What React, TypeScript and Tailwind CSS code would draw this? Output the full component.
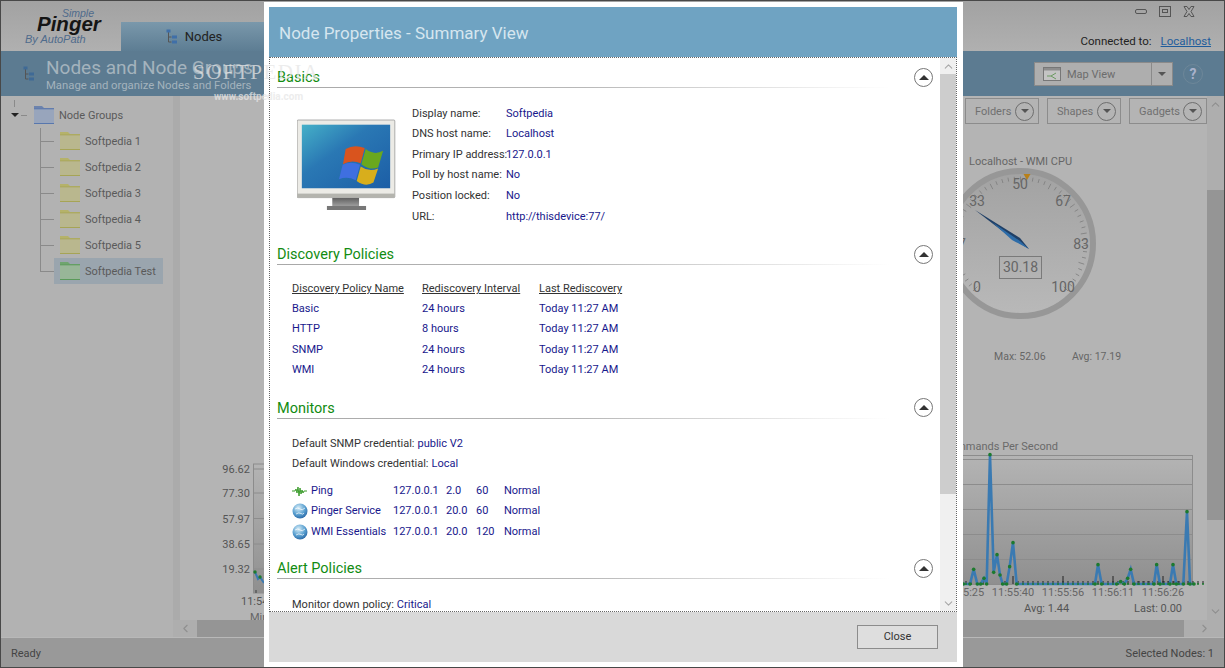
import React from "react";
import { ChevronUp, ChevronDown, ChevronLeft, ChevronRight } from "lucide-react";

const zoomLine: [number, number][] = [
  [250, 462], [270, 462], [281, 418], [292, 462], [302, 462], [312, 445], [320, 462], [330, 74], [341, 427], [351, 374],
  [360, 435], [368, 462], [380, 462], [389, 410], [399, 338], [410, 462], [645, 462], [654, 404], [665, 462], [710, 462],
  [722, 455], [733, 462], [743, 445], [752, 418], [762, 462], [822, 462], [830, 404], [840, 462], [870, 462], [879, 404],
  [889, 462], [910, 462], [921, 245], [930, 462], [942, 462],
];
// the chart points were read off a 3x crop that starts at (880, 430)
const linePts = zoomLine.map(([x, y]) => [880 + x / 3, 430 + y / 3]);
const baseDots = [
  ...Array.from({ length: 43 }, (_, i) => 1018 + i * 5),
  ...Array.from({ length: 12 }, (_, i) => 1134 + i * 5),
  ...[966, 971, 977, 983, 1002, 1005],
];

function TreeIcon({ color = "#3f6fa8" }: { color?: string }) {
  return (
    <svg width="12" height="15" viewBox="0 0 12 15" fill="none">
      <path d="M2.5 3v10h3M2.5 8h3" stroke="#555" />
      <rect x="0.5" y="0.5" width="4" height="3" fill={color} />
      <rect x="6" y="6.5" width="5" height="3" fill={color} />
      <rect x="6" y="11.5" width="5" height="3" fill={color} />
    </svg>
  );
}

function Folder({ top, body, edge }: { top: string; body: string; edge: string }) {
  return (
    <svg width="20" height="20" viewBox="0 0 20 20" className="shrink-0">
      <path d="M0 1h8l2 2h10v16H0z" fill={top} />
      <rect x="0" y="4" width="20" height="15" fill={body} />
      <rect x="0" y="18" width="20" height="1" fill={edge} />
      <rect x="0" y="3.5" width="20" height="0.8" fill={edge} />
    </svg>
  );
}

function TreeRow({ label, selected }: { label: string; selected?: boolean }) {
  return (
    <div className="flex items-center h-[26px]">
      <div className="w-[13px] h-px bg-[#8a8a8a]" />
      <div className={`flex items-center gap-[5px] h-[26px] w-[109px] pl-[6px] ${selected ? "bg-[#9aa5ae]" : ""}`}>
        {selected ? <Folder top="#6fa56f" body="#98b698" edge="#5a9a5a" /> : <Folder top="#b5b26a" body="#b9b78e" edge="#a6a456" />}
        <span className="pt-[3px] text-[11px] text-[#5a5a5a] whitespace-nowrap">{label}</span>
      </div>
    </div>
  );
}

function ToolButton({ label, width }: { label: string; width: string }) {
  return (
    <div className={`flex items-center justify-between h-[26px] pl-[9px] pr-[4px] border border-[#8c8c8c] ${width}`}>
      <span className="pt-[3px] text-[11px] text-[#707070]">{label}</span>
      <div className="flex items-center justify-center w-[19px] h-[19px] rounded-full border border-[#6e6e6e]">
        <div className="w-0 h-0 border-x-[4px] border-x-transparent border-t-[4px] border-t-[#555]" />
      </div>
    </div>
  );
}

function Section({ title, children }: { title: string; children: React.ReactNode }) {
  return (
    <div>
      <div className="flex items-center h-[22px]">
        <div className="relative w-[613px] h-[22px]">
          <div className="text-[14.5px] leading-[24px] text-[#128c12]">{title}</div>
          <div className="absolute left-0 right-0 bottom-0 h-px bg-linear-to-r from-[#a8a8a8] via-[#b8b8b8] to-transparent" />
        </div>
        <div className="flex items-center justify-center ml-[24px] w-[19px] h-[19px] rounded-full border border-[#777] bg-white">
          <div className="w-0 h-0 border-x-[5px] border-x-transparent border-b-[5px] border-b-[#333]" />
        </div>
      </div>
      {children}
    </div>
  );
}

function Prop({ label, value }: { label: string; value: string }) {
  return (
    <div className="flex items-center h-[20.6px]">
      <span className="w-[94px] text-[#333] whitespace-nowrap">{label}</span>
      <span className="text-[#18188c]">{value}</span>
    </div>
  );
}

function Monitor() {
  return (
    <svg width="99" height="92" viewBox="100 355 295 275" className="shrink-0">
      <defs>
        <linearGradient id="screen" x1="0" y1="0" x2="1" y2="1">
          <stop offset="0" stopColor="#45b0c8" />
          <stop offset="0.4" stopColor="#2a78b4" />
          <stop offset="1" stopColor="#1c5ea6" />
        </linearGradient>
        <linearGradient id="stand" x1="0" y1="0" x2="0" y2="1">
          <stop offset="0" stopColor="#5d5d5d" />
          <stop offset="1" stopColor="#a0a0a0" />
        </linearGradient>
      </defs>
      <rect x="205" y="590" width="80" height="26" fill="url(#stand)" />
      <rect x="189" y="615" width="117" height="12" fill="#777" />
      <rect x="100" y="358" width="292" height="232" rx="3" fill="#ecebe6" stroke="#8a8a8a" strokeWidth="2" />
      <rect x="100" y="578" width="292" height="12" fill="#b4b4ae" />
      <rect x="114" y="372" width="264" height="190" fill="url(#screen)" />
      <path d="M245 445Q270 430 302 442L290 487Q262 476 237 490Z" fill="#d9541e" />
      <path d="M305 445Q330 465 357 450L342 500Q318 510 292 490Z" fill="#6aa81e" />
      <path d="M236 492Q260 480 288 492L275 538Q250 525 225 535Z" fill="#3f6fe0" />
      <path d="M290 497Q315 515 342 503L328 545Q305 560 278 540Z" fill="#d8ae1c" />
    </svg>
  );
}

function Globe({ id }: { id: string }) {
  return (
    <svg width="16" height="16" viewBox="0 0 16 16" className="shrink-0">
      <defs>
        <radialGradient id={id} cx="0.4" cy="0.3" r="0.8">
          <stop offset="0" stopColor="#d8eef8" />
          <stop offset="0.55" stopColor="#5aa0d0" />
          <stop offset="1" stopColor="#1d5a9c" />
        </radialGradient>
      </defs>
      <circle cx="8" cy="8" r="7.5" fill={`url(#${id})`} />
      <path d="M3 6q3-2 5 0t5-1M4 11q3-2 5-.5t3-.5" stroke="#fff" strokeOpacity="0.7" fill="none" />
    </svg>
  );
}

function PingIcon() {
  return (
    <svg width="16" height="12" viewBox="0 0 16 12" className="shrink-0">
      <path d="M0 6h3l1-2 1 4 1-6 1 9 1-8 1 6 1-4 1 3 1-2h3" stroke="#3c9c2c" fill="none" />
    </svg>
  );
}

function MonitorRow({ icon, name, a, b, c }: { icon: React.ReactNode; name: string; a: string; b: string; c: string }) {
  return (
    <div className="flex items-center h-[20.5px] text-[#18188c]">
      <span className="w-[19px] flex justify-start">{icon}</span>
      <span className="w-[82px] whitespace-nowrap">{name}</span>
      <span className="w-[53px]">127.0.0.1</span>
      <span className="w-[30px]">{a}</span>
      <span className="w-[28px]">{b}</span>
      <span>{c}</span>
    </div>
  );
}

function Gauge() {
  const cx = 1020.5;
  const cy = 243.5;
  const ticks = Array.from({ length: 51 }, (_, i) => {
    const a = ((225 - i * 5.4) * Math.PI) / 180;
    const long = i % 5 === 0;
    const r1 = 67;
    const r2 = long ? 61 : 63;
    return { x1: cx + r1 * Math.cos(a), y1: cy - r1 * Math.sin(a), x2: cx + r2 * Math.cos(a), y2: cy - r2 * Math.sin(a) };
  });
  const labels: [string, number, number][] = [
    ["0", 977, 292], ["17", 958, 249], ["33", 977, 206], ["50", 1020, 189], ["67", 1063, 206], ["83", 1081, 249], ["100", 1063, 292],
  ];
  return (
    <svg width="200" height="215" viewBox="945 150 200 215" className="absolute left-[765px] top-[54px]" fontFamily="Roboto,sans-serif">
      <defs>
        <linearGradient id="gaugeFace" x1="0" y1="0" x2="0" y2="1">
          <stop offset="0" stopColor="#a2a2a2" />
          <stop offset="1" stopColor="#b9b9b9" />
        </linearGradient>
      </defs>
      <text x="969" y="165" fontSize="11" fill="#666">Localhost - WMI CPU</text>
      <circle cx={cx} cy={cy} r="72.5" fill="url(#gaugeFace)" stroke="#979797" strokeWidth="6" />
      {ticks.map((t, i) => (
        <line key={i} {...t} stroke="#7c7c7c" strokeWidth="0.8" />
      ))}
      {labels.map(([s, x, y]) => (
        <text key={s} x={x} y={y} fontSize="14" fill="#666" textAnchor="middle">{s}</text>
      ))}
      <path d="M1023.5 174h7l-3.5 6z" fill="#b8801a" />
      <path d="M975 210L1020 238L1029 249L1014 240Z" fill="#1f3f66" />
      <path d="M992 222L1020 241L1029 249L1012 240Z" fill="#2d6ca8" />
      <rect x="999.5" y="256.5" width="42" height="22" fill="none" stroke="#7a7a7a" />
      <text x="1020.5" y="272" fontSize="14" fill="#666" textAnchor="middle">30.18</text>
      <text x="994" y="360" fontSize="10.5" fill="#666">Max: 52.06</text>
      <text x="1072" y="360" fontSize="10.5" fill="#666">Avg: 17.19</text>
    </svg>
  );
}

function RightChart() {
  const grid = [459, 484, 509, 534, 559];
  const times: [string, number][] = [["11:55:25", 963], ["11:55:40", 1013], ["11:55:56", 1063], ["11:56:11", 1113], ["11:56:26", 1163]];
  return (
    <svg width="345" height="238" viewBox="880 430 345 238" className="absolute left-[700px] top-[334px]" fontFamily="Roboto,sans-serif">
      <defs>
        <linearGradient id="plotBg" x1="0" y1="0" x2="0" y2="1">
          <stop offset="0" stopColor="#b4b4b4" />
          <stop offset="1" stopColor="#8f8f8f" />
        </linearGradient>
      </defs>
      <text x="1058" y="450" fontSize="11" fill="#6a6a6a" textAnchor="end">Commands Per Second</text>
      <rect x="880" y="455.5" width="312.5" height="129" fill="url(#plotBg)" stroke="#8c8c8c" />
      {grid.map((y) => (
        <line key={y} x1="880" x2="1192" y1={y + 0.5} y2={y + 0.5} stroke="#8c8c8c" />
      ))}
      {[1013, 1063, 1113, 1163].map((x) => (
        <line key={x} x1={x} x2={x} y1="576" y2="584" stroke="#222" />
      ))}
      {baseDots.map((x) => (
        <line key={x} x1={x} x2={x} y1="581" y2="584" stroke="#222" />
      ))}
      <polyline points={linePts.map((p) => p.join(",")).join(" ")} fill="none" stroke="#3a7ab2" strokeWidth="2.6" />
      {linePts.map(([x, y], i) => (
        <circle key={i} cx={x} cy={y} r="1.8" fill="#1d7a2e" />
      ))}
      {baseDots.map((x) => (
        <circle key={x} cx={x} cy="584" r="1" fill="#1d7a2e" />
      ))}
      {times.map(([s, x]) => (
        <text key={s} x={x} y="596" fontSize="11" fill="#666" textAnchor="middle">{s}</text>
      ))}
      <text x="1024" y="612" fontSize="11" fill="#555">Avg: 1.44</text>
      <text x="1134" y="612" fontSize="11" fill="#555">Last: 0.00</text>
    </svg>
  );
}

function LeftChart() {
  const ticks: [string, number][] = [["96.62", 469], ["77.30", 493], ["57.97", 518.5], ["38.65", 544], ["19.32", 569]];
  return (
    <svg width="60" height="165" viewBox="220 460 60 165" className="absolute left-[40px] top-[364px]" fontFamily="Roboto,sans-serif">
      <defs>
        <linearGradient id="plotBgL" x1="0" y1="0" x2="0" y2="1">
          <stop offset="0" stopColor="#b4b4b4" />
          <stop offset="1" stopColor="#8f8f8f" />
        </linearGradient>
      </defs>
      <rect x="253.5" y="464" width="30" height="129" fill="url(#plotBgL)" stroke="#8c8c8c" />
      {ticks.map(([s, y]) => (
        <g key={s}>
          <line x1="253" x2="270" y1={y} y2={y} stroke="#8c8c8c" />
          <text x="250" y={y + 4} fontSize="11" fill="#555" textAnchor="end">{s}</text>
        </g>
      ))}
      <rect x="255" y="590" width="2" height="3" fill="#666" />
      <polyline points="255,572 258,579 260,577 264,583" fill="none" stroke="#3a7ab2" strokeWidth="2" />
      <circle cx="255" cy="572" r="1.7" fill="#1d7a2e" />
      <circle cx="260" cy="577" r="1.7" fill="#1d7a2e" />
      <text x="241" y="605" fontSize="11" fill="#555">11:54:50</text>
      <text x="250" y="621" fontSize="11" fill="#666">Min</text>
    </svg>
  );
}

export default function App() {
  const folders = ["Softpedia 1", "Softpedia 2", "Softpedia 3", "Softpedia 4", "Softpedia 5"];

  return (
    <div className="relative flex flex-col w-[1225px] h-[668px] overflow-hidden border border-[#484848] bg-[#b2b2b2] font-['Roboto',sans-serif]">
      {/* title bar */}
      <div className="flex h-[50px] shrink-0 bg-linear-to-b from-[#a2a2a2] to-[#b0b0b0]">
        <div className="flex flex-col w-[120px] shrink-0 italic font-['Liberation_Sans',sans-serif]">
          <div className="self-end pr-[27px] pt-[6px] text-[10.5px] leading-[12px] text-[#4f6b8c]">Simple</div>
          <div className="pl-[36px] -mt-[5px] text-[20.5px] leading-[19px] font-black text-[#151515]">Pinger</div>
          <div className="pl-[24px] text-[11px] leading-[13px] text-[#4f6b8c]">By AutoPath</div>
        </div>
        <div className="flex items-center justify-center gap-[7px] w-[180px] h-[29px] mt-[21px] pr-[34px] bg-linear-to-b from-[#7a98ab] to-[#5d7d93]">
          <TreeIcon />
          <span className="text-[13px] text-[#222]">Nodes</span>
        </div>
        <div className="flex flex-col items-end flex-1 pr-[13px]">
          <div className="flex items-center gap-[12px] h-[20px] pr-[16px] text-[#555]">
            <div className="w-[12px] h-[5px] rounded-[2px] border border-[#555]" />
            <div className="flex items-center justify-center w-[12px] h-[11px] border border-[#555]">
              <div className="w-[6px] h-[4px] border border-[#555]" />
            </div>
            <svg width="12" height="11" viewBox="0 0 12 11">
              <path d="M1 .5h3l2 3 2-3h3L8 5.500l3 5H8l-2-3-2 3H1l3-5z" fill="#a8a8a8" stroke="#555" />
            </svg>
          </div>
          <div className="flex gap-[9px] mt-[11px] text-[11.5px] leading-[18px]">
            <span className="text-[#222]">Connected to:</span>
            <span className="text-[#1f5c9c] underline">Localhost</span>
          </div>
        </div>
      </div>

      {/* section header */}
      <div className="flex items-center h-[45px] shrink-0 bg-[#5c7b91]">
        <div className="ml-[22px]"><TreeIcon color="#3f6a96" /></div>
        <div className="ml-[11px] flex-1 pt-[3px]">
          <div className="text-[19px] leading-[22px] text-[#a4b3bd] whitespace-nowrap">Nodes and Node Groups</div>
          <div className="text-[11.3px] leading-[14px] text-[#a4b3bd] whitespace-nowrap">Manage and organize Nodes and Folders</div>
        </div>
        <div className="flex items-center w-[139px] h-[24px] mr-[10px] border border-[#8a8a8a] bg-[#aeaeae]">
          <div className="flex items-center flex-1 gap-[6px] pl-[8px]">
            <svg width="18" height="14" viewBox="0 0 18 14">
              <rect x="0.5" y="0.5" width="17" height="13" fill="#c4c4c4" stroke="#777" />
              <rect x="1" y="1" width="16" height="2.5" fill="#8d8d8d" />
              <path d="M4 9h4M8 9l5-3M8 9l5 3" stroke="#6a9a60" />
            </svg>
            <span className="pt-[3px] text-[11px] text-[#6c6c6c]">Map View</span>
          </div>
          <div className="flex items-center justify-center w-[21px] h-full border-l border-[#8a8a8a]">
            <div className="w-0 h-0 border-x-[4px] border-x-transparent border-t-[4px] border-t-[#555]" />
          </div>
        </div>
        <div className="flex items-center justify-center w-[20px] h-[20px] mr-[21px] rounded-full border border-[#6d8799] text-[14px] font-bold leading-none text-[#a9b2cc]">?</div>
      </div>

      {/* body */}
      <div className="flex flex-1 min-h-0">
        <div className="w-[172px] shrink-0 pt-[6px] bg-[#b2b2b2]">
          <div className="relative flex items-center h-[26px] pl-[10px]">
            <div className="absolute left-[13px] -top-[2px] w-px h-[7px] bg-[#8a8a8a]" />
            <div className="w-0 h-0 mr-[2px] border-x-[4px] border-x-transparent border-t-[4px] border-t-[#222]" />
            <div className="w-[6px] h-px mr-[7px] bg-[#8a8a8a]" />
            <Folder top="#6c83ad" body="#98a5bc" edge="#5877ad" />
            <span className="ml-[5px] pt-[2px] text-[11px] text-[#5a5a5a]">Node Groups</span>
          </div>
          <div className="ml-[39px] border-l border-[#8a8a8a] h-[144px]">
            {folders.map((f) => (
              <TreeRow key={f} label={f} />
            ))}
            <TreeRow label="Softpedia Test" selected />
          </div>
        </div>

        <div className="flex flex-col flex-1 min-w-0">
          <div className="flex flex-1 min-h-0">
            <div className="w-[7px] shrink-0 bg-[#ababab]" />
            <div className="relative flex-1 min-w-0 overflow-hidden bg-[#b4b4b4]">
              <div className="flex justify-end gap-[8px] pt-[2px]">
                <ToolButton label="Folders" width="w-[74px]" />
                <ToolButton label="Shapes" width="w-[74px]" />
                <ToolButton label="Gadgets" width="w-[78px]" />
              </div>
              <Gauge />
              <LeftChart />
              <RightChart />
            </div>
            <div className="flex flex-col w-[17px] shrink-0 bg-[#aeaeae] text-[#8f8f8f]">
              <div className="flex justify-center pt-[2px] h-[94px]"><ChevronUp size={13} /></div>
              <div className="h-[330px] bg-[#959595]" />
              <div className="flex flex-1 items-end justify-center pb-[2px]"><ChevronDown size={13} /></div>
            </div>
          </div>
          <div className="flex items-center h-[17px] shrink-0 bg-[#aeaeae] text-[#8f8f8f]">
            <div className="flex justify-center w-[24px]"><ChevronLeft size={13} /></div>
            <div className="flex-1 h-full bg-[#959595]" />
            <div className="flex justify-center w-[40px]"><ChevronRight size={13} /></div>
          </div>
        </div>
      </div>

      {/* status bar */}
      <div className="flex items-center justify-between h-[30px] shrink-0 pt-[3px] px-[10px] border-t border-[#b8b8b8] bg-[#999] text-[11px] text-[#444]">
        <span>Ready</span>
        <span>Selected Nodes: 1</span>
      </div>

      {/* modal */}
      <div className="absolute left-[263px] top-[1px] flex flex-col w-[699px] h-[665px] pt-[5px] pb-[5px] pl-[5px] pr-[6px] bg-white">
        <div className="flex items-center h-[50px] shrink-0 pt-[4px] pl-[10px] pr-[6px] bg-[#6fa3c2] text-[17px] text-[#d6e6ef]">
          Node Properties - Summary View
        </div>
        <div className="flex flex-1 min-h-0 border border-dotted border-[#666] text-[11px]">
          <div className="flex-1 min-w-0 overflow-hidden pl-[7px] pt-[8px]">
            <Section title="Basics">
              <div className="flex mt-[15.5px] mb-[15.5px] h-[124px]">
                <div className="ml-[20px] mt-[15.5px]"><Monitor /></div>
                <div className="ml-[16px]">
                  <Prop label="Display name:" value="Softpedia" />
                  <Prop label="DNS host name:" value="Localhost" />
                  <Prop label="Primary IP address:" value="127.0.0.1" />
                  <Prop label="Poll by host name:" value="No" />
                  <Prop label="Position locked:" value="No" />
                  <Prop label="URL:" value="http://thisdevice:77/" />
                </div>
              </div>
            </Section>
            <Section title="Discovery Policies">
              <div className="mt-[15px] mb-[16px] ml-[15px]">
                <div className="grid grid-cols-[130px_117px_120px] items-center h-[19px] text-[#333] underline">
                  <span>Discovery Policy Name</span>
                  <span>Rediscovery Interval</span>
                  <span>Last Rediscovery</span>
                </div>
                {[["Basic", "24 hours"], ["HTTP", "8 hours"], ["SNMP", "24 hours"], ["WMI", "24 hours"]].map(([n, h]) => (
                  <div key={n} className="grid grid-cols-[130px_117px_120px] items-center h-[20.4px] text-[#18188c]">
                    <span>{n}</span>
                    <span>{h}</span>
                    <span>Today 11:27 AM</span>
                  </div>
                ))}
              </div>
            </Section>
            <Section title="Monitors">
              <div className="mt-[16px] mb-[15px] ml-[15px]">
                <div className="flex items-center h-[20px] gap-[3px] text-[#333]">
                  Default SNMP credential: <span className="text-[#18188c]">public V2</span>
                </div>
                <div className="flex items-center h-[20px] gap-[3px] text-[#333]">
                  Default Windows credential: <span className="text-[#18188c]">Local</span>
                </div>
                <div className="mt-[6px]">
                  <MonitorRow icon={<PingIcon />} name="Ping" a="2.0" b="60" c="Normal" />
                  <MonitorRow icon={<Globe id="globeA" />} name="Pinger Service" a="20.0" b="60" c="Normal" />
                  <MonitorRow icon={<Globe id="globeB" />} name="WMI Essentials" a="20.0" b="120" c="Normal" />
                </div>
              </div>
            </Section>
            <Section title="Alert Policies">
              <div className="flex items-center h-[20px] gap-[3px] mt-[16px] ml-[15px] text-[#333]">
                Monitor down policy: <span className="text-[#18188c]">Critical</span>
              </div>
            </Section>
          </div>
          <div className="flex flex-col w-[16px] shrink-0 bg-[#f0f0f0] text-[#a8a8a8]">
            <div className="flex justify-center items-center h-[16px]"><ChevronUp size={13} /></div>
            <div className="h-[420px] bg-[#cdcdcd]" />
            <div className="flex flex-1 items-end justify-center pb-[1px]"><ChevronDown size={13} /></div>
          </div>
        </div>
        <div className="flex items-center justify-end h-[50px] shrink-0 pr-[19px] bg-[#d9d9d9]">
          <div className="flex items-center justify-center w-[81px] h-[24px] border border-[#8c8c8c] bg-[#dedede] text-[11px] text-[#333]">Close</div>
        </div>
      </div>

      {/* watermark, sits on top of everything */}
      <div className="absolute left-[192px] top-[58px] pointer-events-none text-[#e6e6e6]/75">
        <div className="text-[21px] leading-[26px] tracking-[1.5px] font-['Liberation_Serif',serif]">SOFTPEDIA</div>
        <div className="mt-[6px] ml-[21px] text-[10px] leading-[12px] font-bold">www.softpedia.com</div>
      </div>
    </div>
  );
}
